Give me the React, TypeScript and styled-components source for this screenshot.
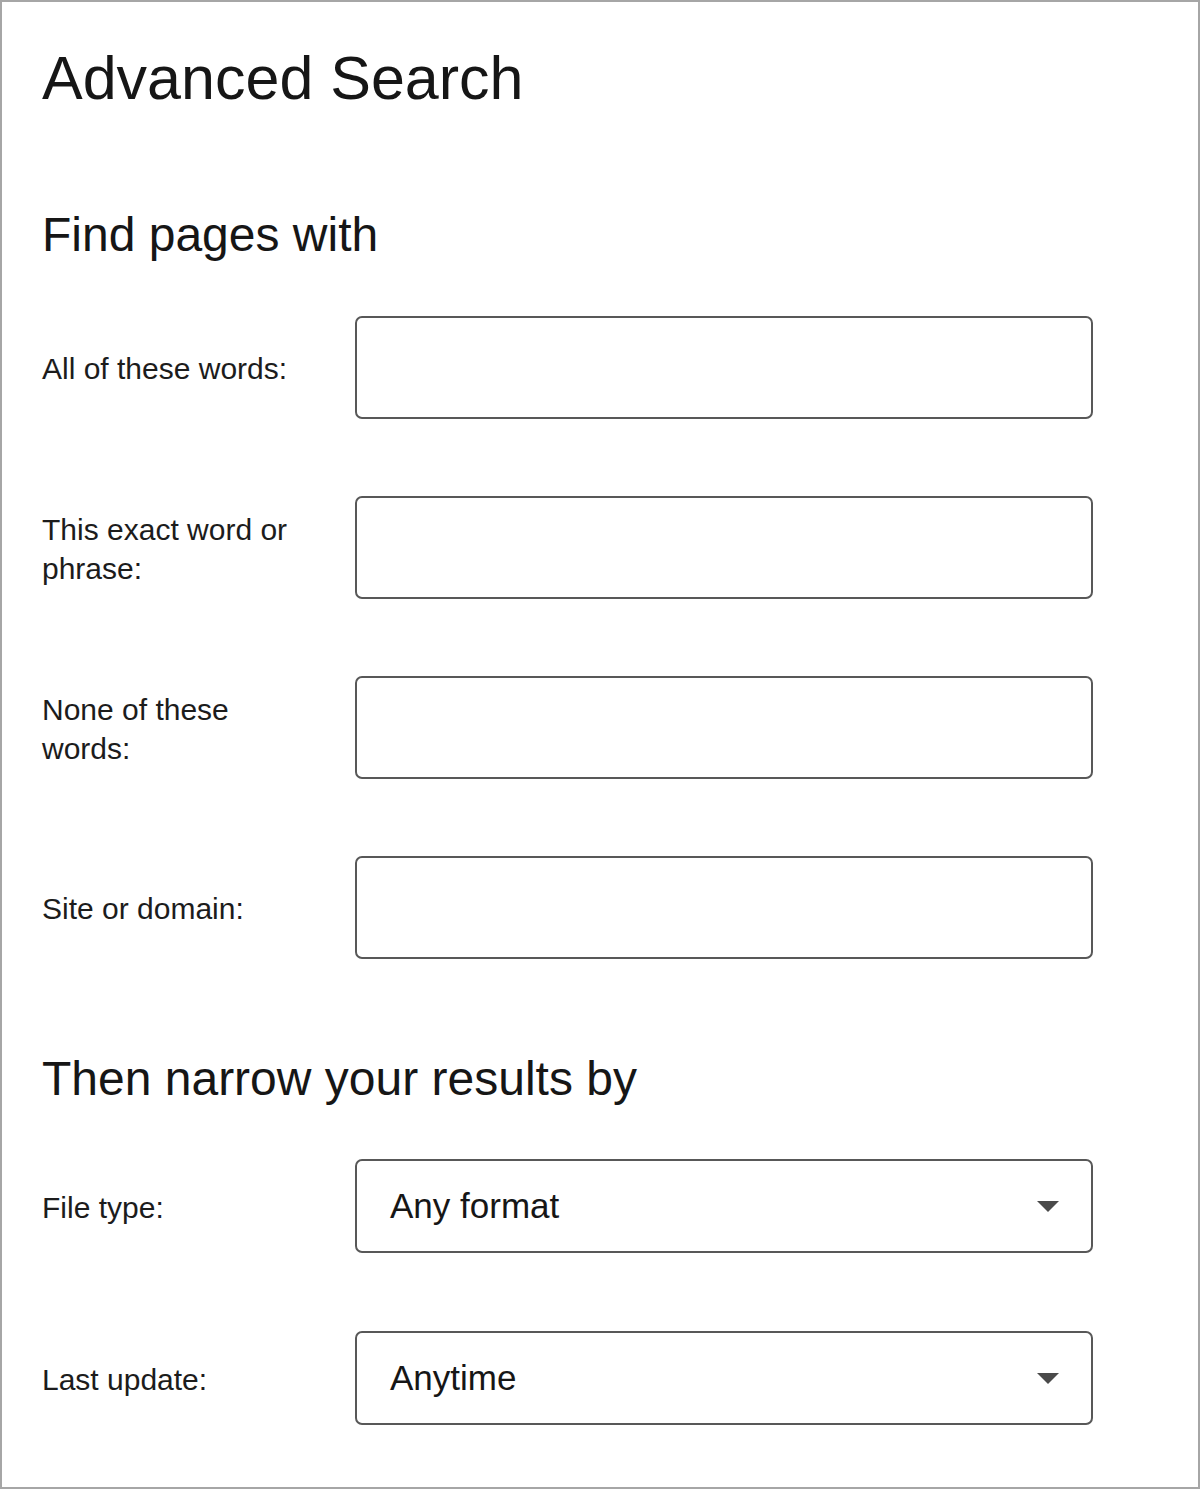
import React from "react";
import styled, { createGlobalStyle } from "styled-components";

const GlobalStyle = createGlobalStyle`
  html, body {
    margin: 0;
    padding: 0;
    background: #ffffff;
  }
  body {
    font-family: "Liberation Sans", Arial, sans-serif;
    color: #1a1a1a;
  }
`;

const Page = styled.div`
  box-sizing: border-box;
  width: 1200px;
  height: 1489px;
  border: 2px solid #a6a6a6;
  padding: 42px 0 0 40px;
  display: flex;
  flex-direction: column;
`;

const Title = styled.h1`
  margin: 0;
  font-size: 61px;
  line-height: 68px;
  font-weight: 400;
  color: #161616;
`;

const SectionHeading = styled.h2<{ $top: number }>`
  margin: ${(props) => props.$top}px 0 0 0;
  font-size: 48px;
  line-height: 54px;
  font-weight: 400;
  color: #161616;
`;

const Fields = styled.div<{ $gap: number; $top: number }>`
  display: flex;
  flex-direction: column;
  gap: ${(props) => props.$gap}px;
  margin-top: ${(props) => props.$top}px;
`;

const Row = styled.label`
  display: grid;
  grid-template-columns: 313px 738px;
  align-items: center;
`;

const LabelText = styled.span`
  font-size: 30px;
  line-height: 39px;
  color: #1c1c1c;
  max-width: 262px;
  padding-top: 2px;
`;

const TextBox = styled.input`
  box-sizing: border-box;
  width: 738px;
  height: 103px;
  border: 2px solid #585858;
  border-radius: 7px;
  background: #ffffff;
  outline: none;
  padding: 0 33px;
  font-family: inherit;
  font-size: 35px;
`;

const SelectBox = styled.div`
  box-sizing: border-box;
  width: 738px;
  height: 94px;
  border: 2px solid #585858;
  border-radius: 7px;
  display: flex;
  align-items: center;
  justify-content: space-between;
  padding: 0 32px 0 33px;
  font-size: 35px;
  color: #161616;
`;

const Arrow = () => (
  <svg width="22" height="11" viewBox="0 0 22 11" aria-hidden="true">
    <path d="M0 0 H22 L11 11 Z" fill="#4a4a4a" />
  </svg>
);

const textFields = [
  "All of these words:",
  "This exact word or phrase:",
  "None of these words:",
  "Site or domain:",
];

const narrowFields = [
  { label: "File type:", value: "Any format" },
  { label: "Last update:", value: "Anytime" },
];

export default function App() {
  return (
    <>
      <GlobalStyle />
      <Page>
        <Title>Advanced Search</Title>
        <SectionHeading $top={96}>Find pages with</SectionHeading>
        <Fields $gap={77} $top={54}>
          {textFields.map((label) => (
            <Row key={label}>
              <LabelText>{label}</LabelText>
              <TextBox type="text" />
            </Row>
          ))}
        </Fields>
        <SectionHeading $top={93}>Then narrow your results by</SectionHeading>
        <Fields $gap={78} $top={53}>
          {narrowFields.map((field) => (
            <Row key={field.label}>
              <LabelText>{field.label}</LabelText>
              <SelectBox role="combobox">
                <span>{field.value}</span>
                <Arrow />
              </SelectBox>
            </Row>
          ))}
        </Fields>
      </Page>
    </>
  );
}
